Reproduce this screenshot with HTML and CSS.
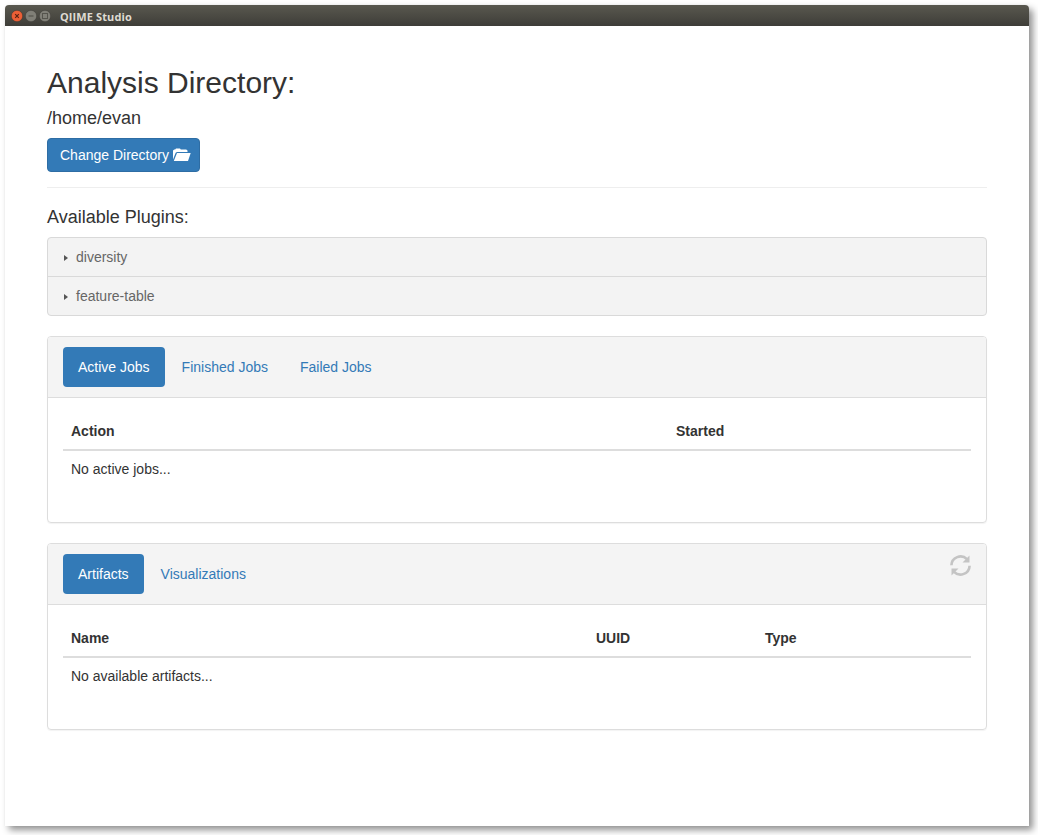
FILE: index.html
```html
<!DOCTYPE html>
<html lang="en">
<head>
<meta charset="utf-8">
<title>QIIME Studio</title>
<link rel="stylesheet" href="styles.css">
</head>
<body>
<div class="window">
  <header class="titlebar">
    <svg class="controls" width="40" height="14" viewBox="0 0 40 14">
      <circle cx="6" cy="7" r="5.700" fill="#ec5f36" stroke="#35342f" stroke-width=".5"/>
      <path d="M4.200 5.200l3.600 3.600M7.800 5.200l-3.600 3.600" stroke="#5a2413" stroke-width="1.200"/>
      <circle cx="20" cy="7" r="5.700" fill="#807f77" stroke="#3a3934" stroke-width=".5"/>
      <path d="M17.500 7h5" stroke="#55544d" stroke-width="1.200"/>
      <circle cx="34" cy="7" r="5.700" fill="#807f77" stroke="#3a3934" stroke-width=".5"/>
      <rect x="31.500" y="4.500" width="5" height="5" fill="none" stroke="#55544d"/>
    </svg>
    <span class="title">QIIME Studio</span>
  </header>
  <main class="container">
    <h2 class="heading">Analysis Directory:</h2>
    <h4 class="subheading">/home/evan</h4>
    <button class="btn">Change Directory
      <svg class="folder" width="18" height="14" viewBox="0 0 18 14" fill="#fff">
        <path d="M0 11.500V2.600L1.200 1.400h1L3 .5h4l.8.9h5.400l1.300 1.200V4H4L2.700 4.700z"/>
        <path d="M4 5h13.700L15 13H.800z"/>
      </svg>
    </button>
    <hr class="rule">
    <h4 class="subheading">Available Plugins:</h4>
    <ul class="plugins">
      <li class="plugin"><svg class="caret" width="4" height="6" viewBox="0 0 4 6"><path d="M0 0l4 3-4 3z"/></svg>diversity</li>
      <li class="plugin"><svg class="caret" width="4" height="6" viewBox="0 0 4 6"><path d="M0 0l4 3-4 3z"/></svg>feature-table</li>
    </ul>
    <section class="panel">
      <nav class="tabs">
        <a class="tab active">Active Jobs</a>
        <a class="tab">Finished Jobs</a>
        <a class="tab">Failed Jobs</a>
      </nav>
      <div class="panel-body">
        <table class="table">
          <thead><tr><th class="col-action">Action</th><th>Started</th></tr></thead>
          <tbody><tr><td colspan="2">No active jobs...</td></tr></tbody>
        </table>
      </div>
    </section>
    <section class="panel">
      <nav class="tabs">
        <a class="tab active">Artifacts</a>
        <a class="tab">Visualizations</a>
        <svg class="refresh" width="21" height="22" viewBox="0 0 21 22">
          <path d="M1.400 11.300A9.100 9.100 0 0 1 17 5.200" fill="none" stroke="#c4c4c4" stroke-width="2.600"/>
          <path d="M19.500 1.500v7H12.500z" fill="#c4c4c4"/>
          <path d="M19.600 11.700A9.100 9.100 0 0 1 4 17.800" fill="none" stroke="#c4c4c4" stroke-width="2.600"/>
          <path d="M1.500 21.500v-7H8.500z" fill="#c4c4c4"/>
        </svg>
      </nav>
      <div class="panel-body">
        <table class="table">
          <thead><tr><th class="col-name">Name</th><th class="col-uuid">UUID</th><th>Type</th></tr></thead>
          <tbody><tr><td colspan="3">No available artifacts...</td></tr></tbody>
        </table>
      </div>
    </section>
  </main>
</div>
</body>
</html>
```
FILE: styles.css
```css
* { box-sizing: border-box; }
body {
  margin: 0;
  padding: 5px 9px 9px 5px;
  height: 835px;
  overflow: hidden;
  background: #fff;
  color: #333;
  font: 14px/20px "Liberation Sans", Arial, sans-serif;
}
.window {
  width: 1024px;
  height: 821px;
  background: #fff;
  border-radius: 4px 4px 0 0;
  box-shadow: 4px 4px 7px rgba(0, 0, 0, .43), 0 0 1px rgba(0, 0, 0, .12);
}
.titlebar {
  display: flex;
  align-items: center;
  height: 21px;
  padding-left: 6px;
  border-radius: 4px 4px 0 0;
  background: linear-gradient(#59584f, #3e3d38);
}
.title {
  margin: 2px 0 0 9px;
  color: #dfdbd2;
  font: bold 11px/16px "Open Sans", "Noto Sans", sans-serif;
  letter-spacing: .1px;
}
.container { width: 940px; margin: 0 auto; padding-top: 40px; }
.heading { margin: 0 0 10px; font-size: 30px; line-height: 33px; }
.heading, .subheading { font-weight: 400; }
.subheading { margin: 0 0 11px; font-size: 18px; line-height: 18px; }
.btn {
  display: flex;
  align-items: center;
  gap: 4px;
  width: 153px;
  height: 34px;
  padding: 0 0 0 12px;
  border: 1px solid #2e6da4;
  border-radius: 4px;
  background: #337ab7;
  color: #fff;
  font: inherit;
}
.folder { flex: none; }
.rule { margin: 15px 0 20px; border: 0; border-top: 1px solid #eee; }
.plugins {
  margin: 0 0 20px;
  padding: 0;
  list-style: none;
  border: 1px solid #d9d9d9;
  border-radius: 4px;
  background: #f3f3f3;
  color: #666;
}
.plugin { display: flex; align-items: center; height: 38px; padding-left: 16px; }
.plugin + .plugin { height: 39px; border-top: 1px solid #d9d9d9; }
.caret { margin: 2px 8px 0 0; fill: #555; }
.panel {
  margin-bottom: 20px;
  border: 1px solid #ddd;
  border-radius: 4px;
  box-shadow: 0 1px 1px rgba(0, 0, 0, .05);
}
.tabs {
  display: flex;
  gap: 2px;
  height: 61px;
  padding: 10px 15px;
  border-bottom: 1px solid #ddd;
  border-radius: 3px 3px 0 0;
  background: #f4f4f4;
}
.tab { padding: 10px 15px; border-radius: 4px; color: #337ab7; }
.tab.active { background: #337ab7; color: #fff; }
.refresh { margin-left: auto; }
.panel-body { padding: 15px 15px 35px; }
.table { width: 100%; table-layout: fixed; border-collapse: separate; border-spacing: 0; }
.table th, .table td { padding: 8px; text-align: left; }
.table th { border-bottom: 2px solid #ddd; }
.col-action { width: 605px; }
.col-name { width: 525px; }
.col-uuid { width: 169px; }
```
